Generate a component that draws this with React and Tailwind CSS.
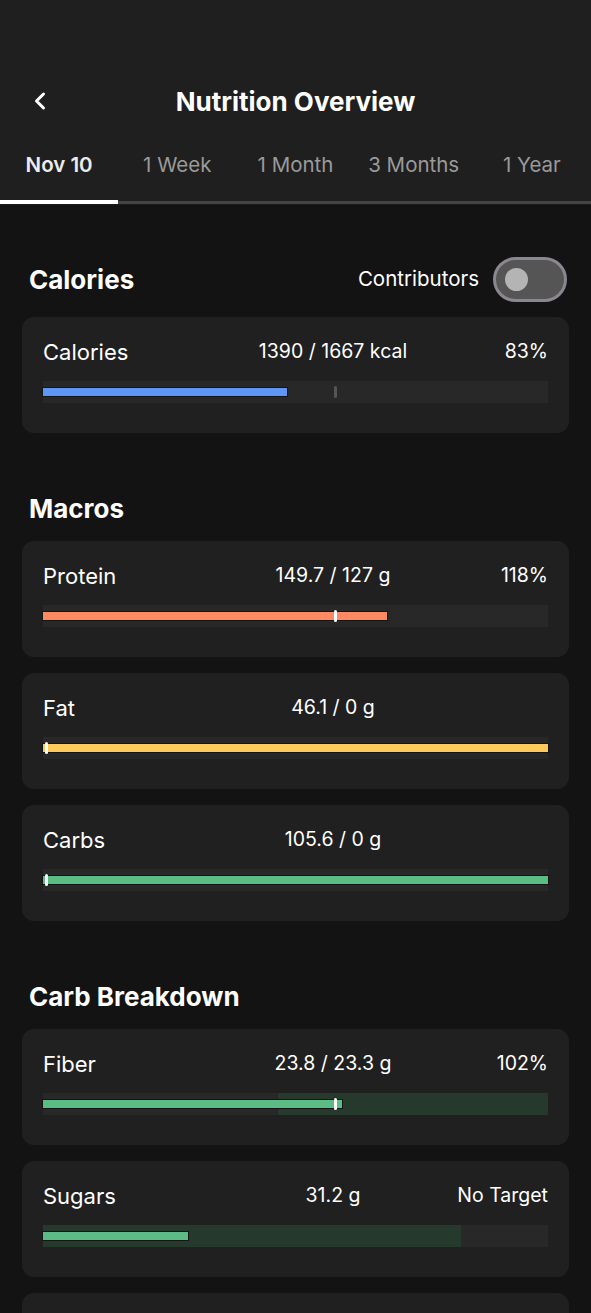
import React from "react";
import { ChevronLeft } from "lucide-react";

const tabs = ["Nov 10", "1 Week", "1 Month", "3 Months", "1 Year"];

const Bar = ({ fill, color, target, zone }) => (
  <div className="relative h-[22px] bg-[#282828]">
    {zone && (
      <div
        className="absolute inset-y-0 bg-[#253a2d]"
        style={{ left: `${zone[0]}%`, width: `${zone[1] - zone[0]}%` }}
      />
    )}
    {fill > 0 && (
      <div
        className={`absolute left-0 top-[7px] h-[8px] ${color} shadow-[0_0_0_1px_#151515]`}
        style={{ width: `${fill}%` }}
      />
    )}
    {target !== undefined && (
      <div
        className={`absolute top-[5px] h-[12px] w-[3px] rounded-full ${
          target.light ? "bg-white" : "bg-[#555]"
        }`}
        style={{ left: `calc(${target.at}% - 1px)` }}
      />
    )}
  </div>
);

const NutrientCard = ({ label, value, right, bar }) => (
  <div className="rounded-xl bg-[#202020] px-[21px] pt-[23px] pb-[30px]">
    <div className="flex items-center h-6">
      <div className="w-[175px] text-[22px] text-white">{label}</div>
      <div className="flex-1 text-center text-[19.5px] text-white">{value}</div>
      <div className="w-[100px] text-right text-[19.5px] text-white">{right}</div>
    </div>
    <div className="mt-[17px]">
      <Bar {...bar} />
    </div>
  </div>
);

const SectionTitle = ({ children }) => (
  <h2 className="text-[26px] font-bold text-white px-[7px]">{children}</h2>
);

export default function App() {
  return (
    <div
      className="min-h-[1313px] bg-[#131313] text-white"
      style={{ fontFamily: "Inter, 'Noto Sans', sans-serif" }}
    >
      {/* Header */}
      <div className="bg-[#1f1f1f] pt-[84px]">
        <div className="relative flex items-center justify-center h-[34px]">
          <ChevronLeft className="absolute left-[26px] w-7 h-7 text-white" strokeWidth={2.6} />
          <h1 className="text-[26px] font-bold">Nutrition Overview</h1>
        </div>
        <div className="grid grid-cols-5 mt-[32px] h-[30px] items-center">
          {tabs.map((t, i) => (
            <div
              key={t}
              className={`text-center text-[20.5px] ${
                i === 0 ? "font-semibold text-[#ececec]" : "text-[#9a9a9a]"
              }`}
            >
              {t}
            </div>
          ))}
        </div>
        <div className="mt-[20px] flex items-end h-[4px]">
          <div className="w-[118px] h-[4px] bg-white" />
          <div className="flex-1 h-[3px] bg-[#444]" />
        </div>
        <div className="h-[1px] bg-[#1a1a1a]" />
      </div>

      <div className="px-[22px]">
        {/* Calories */}
        <div className="flex items-center justify-between pt-[52px]">
          <SectionTitle>Calories</SectionTitle>
          <div className="flex items-center gap-[14px] pr-[2px]">
            <span className="text-[20.5px] text-white">Contributors</span>
            <div className="w-[74px] h-[45px] rounded-full border-[3px] border-[#8b8690] bg-[#555555] flex items-center pl-[9px]">
              <div className="w-[23px] h-[23px] rounded-full bg-[#b4b4b4]" />
            </div>
          </div>
        </div>
        <div className="mt-[15px]">
          <NutrientCard
            label="Calories"
            value="1390 / 1667 kcal"
            right="83%"
            bar={{ fill: 48.3, color: "bg-[#5e97f6]", target: { at: 57.8, light: false } }}
          />
        </div>

        {/* Macros */}
        <div className="mt-[56px]">
          <SectionTitle>Macros</SectionTitle>
        </div>
        <div className="mt-[13px] flex flex-col gap-4">
          <NutrientCard
            label="Protein"
            value="149.7 / 127 g"
            right="118%"
            bar={{ fill: 68.1, color: "bg-[#ff8a62]", target: { at: 57.8, light: true } }}
          />
          <NutrientCard
            label="Fat"
            value="46.1 / 0 g"
            bar={{ fill: 100, color: "bg-[#ffca5c]", target: { at: 0.6, light: true } }}
          />
          <NutrientCard
            label="Carbs"
            value="105.6 / 0 g"
            bar={{ fill: 100, color: "bg-[#5cbc86]", target: { at: 0.6, light: true } }}
          />
        </div>

        {/* Carb Breakdown */}
        <div className="mt-[56px]">
          <SectionTitle>Carb Breakdown</SectionTitle>
        </div>
        <div className="mt-[13px] flex flex-col gap-4">
          <NutrientCard
            label="Fiber"
            value="23.8 / 23.3 g"
            right="102%"
            bar={{
              fill: 59.2,
              color: "bg-[#5cbc86]",
              target: { at: 57.8, light: true },
              zone: [46.5, 100],
            }}
          />
          <NutrientCard
            label="Sugars"
            value="31.2 g"
            right="No Target"
            bar={{ fill: 28.7, color: "bg-[#5cbc86]", zone: [0, 82.8] }}
          />
          <div className="h-[115px] rounded-xl bg-[#202020]" />
        </div>
      </div>
    </div>
  );
}
